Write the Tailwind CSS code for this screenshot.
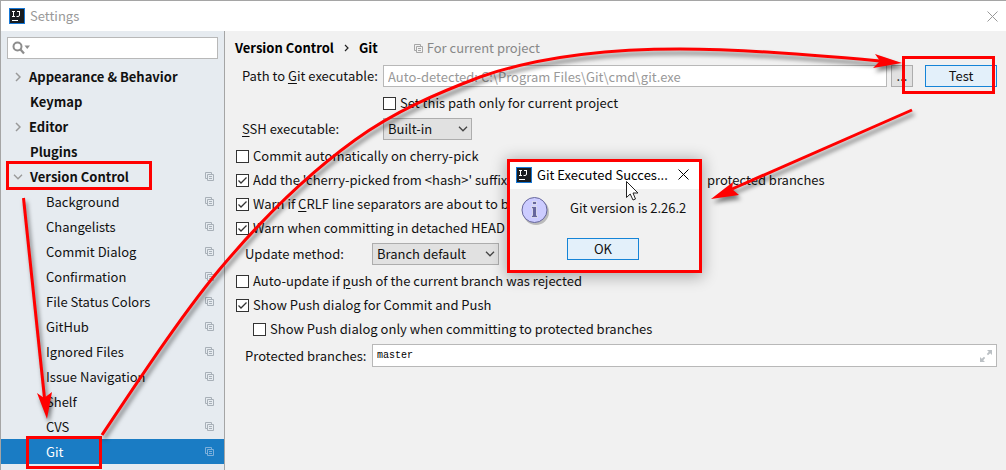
<!DOCTYPE html>
<html lang="en">
<head>
<meta charset="utf-8">
<title>Settings</title>
<script src="https://cdn.jsdelivr.net/npm/@tailwindcss/browser@4"></script>
</head>
<body class="relative flex min-h-screen flex-col overflow-hidden border-t border-l border-[#a5a5a5] bg-[#f1f1f1] font-['Noto_Sans_CJK_SC',sans-serif] text-[13px] leading-5 text-[#111]">
<svg class="hidden">
  <symbol id="copy" viewBox="0 0 9 9"><path d="M2.5 6.500H.5V.5H6.500V2.500M2.500 2.500H8.500V8.500H2.500ZM4 4.500H7M4 6.500H7" fill="none" stroke="currentColor"/></symbol>
  <symbol id="tick" viewBox="0 0 13 13"><path d="M2.500 6.500L5 9L10.500 3.500" fill="none" stroke="#333" stroke-width="1.300"/></symbol>
  <symbol id="down" viewBox="0 0 10 6"><path d="M1 .8L5 4.800L9 .8" fill="none" stroke="currentColor" stroke-width="1.300"/></symbol>
  <symbol id="idea" viewBox="0 0 16 16"><rect x=".5" y=".5" width="15" height="15" fill="#191c20" stroke="#1778d6"/><path d="M3 3.500H6M4.500 3.500V8.500M3 8.500H6M8 3.500H11M10.500 3.500V7Q10.500 8.500 9 8.500H7.500M3 12.500H9" fill="none" stroke="#fff"/></symbol>
  <symbol id="close" viewBox="0 0 11 11"><path d="M.5 .5L10.500 10.500M10.500 .5L.5 10.500" fill="none" stroke="currentColor"/></symbol>
</svg>

<header class="flex h-[30px] items-center gap-[5px] bg-white pr-2 pl-2 text-[#999]">
  <svg class="size-4"><use href="#idea"/></svg>
  <h1>Settings</h1>
  <button aria-label="Close" class="ml-auto"><svg class="size-[11px]"><use href="#close"/></svg></button>
</header>

<div class="flex flex-1">
  <nav class="flex w-56 shrink-0 flex-col border-r border-[#a5a5a5] bg-[#e6ebf0]">
    <div class="mx-1.5 mt-1.5 mb-[5px] flex h-[22px] items-center border border-[#b8b8b8] bg-white pl-1">
      <svg class="h-3.5 w-[19px] shrink-0" viewBox="0 0 19 14"><circle cx="5.500" cy="5.500" r="4" fill="none" stroke="#8d8d8d" stroke-width="2"/><path d="M8.500 8.500L12 12.500" stroke="#8d8d8d" stroke-width="2.200"/><path d="M12.500 4.500H18L15.250 8Z" fill="#8d8d8d"/></svg>
      <input type="search" aria-label="Search settings" class="min-w-0 flex-1 outline-none">
    </div>
    <a href="#" class="flex h-[25px] items-center pl-3.5 font-bold"><svg class="mr-2 h-2.5 w-1.5" viewBox="0 0 6 10"><path d="M1 1L5 5L1 9" fill="none" stroke="#999" stroke-width="1.500"/></svg>Appearance &amp; Behavior</a>
    <a href="#" class="flex h-[25px] items-center pl-[29px] font-bold">Keymap</a>
    <a href="#" class="flex h-[25px] items-center pl-3.5 font-bold"><svg class="mr-2 h-2.5 w-1.5" viewBox="0 0 6 10"><path d="M1 1L5 5L1 9" fill="none" stroke="#999" stroke-width="1.500"/></svg>Editor</a>
    <a href="#" class="flex h-[25px] items-center pl-[29px] font-bold">Plugins</a>
    <a href="#" class="flex h-[25px] items-center pr-2.5 pl-3 font-bold"><svg class="mr-[7px] h-1.5 w-2.5 text-[#999]"><use href="#down"/></svg>Version Control<svg class="ml-auto size-[9px] text-[#a8b0b8]"><use href="#copy"/></svg></a>
    <a href="#" class="flex h-[25px] items-center justify-between pr-2.5 pl-[45px]">Background<svg class="size-[9px] text-[#a8b0b8]"><use href="#copy"/></svg></a>
    <a href="#" class="flex h-[25px] items-center justify-between pr-2.5 pl-[45px]">Changelists<svg class="size-[9px] text-[#a8b0b8]"><use href="#copy"/></svg></a>
    <a href="#" class="flex h-[25px] items-center justify-between pr-2.5 pl-[45px]">Commit Dialog<svg class="size-[9px] text-[#a8b0b8]"><use href="#copy"/></svg></a>
    <a href="#" class="flex h-[25px] items-center justify-between pr-2.5 pl-[45px]">Confirmation<svg class="size-[9px] text-[#a8b0b8]"><use href="#copy"/></svg></a>
    <a href="#" class="flex h-[25px] items-center justify-between pr-2.5 pl-[45px]">File Status Colors<svg class="size-[9px] text-[#a8b0b8]"><use href="#copy"/></svg></a>
    <a href="#" class="flex h-[25px] items-center justify-between pr-2.5 pl-[45px]">GitHub<svg class="size-[9px] text-[#a8b0b8]"><use href="#copy"/></svg></a>
    <a href="#" class="flex h-[25px] items-center justify-between pr-2.5 pl-[45px]">Ignored Files<svg class="size-[9px] text-[#a8b0b8]"><use href="#copy"/></svg></a>
    <a href="#" class="flex h-[25px] items-center justify-between pr-2.5 pl-[45px]">Issue Navigation<svg class="size-[9px] text-[#a8b0b8]"><use href="#copy"/></svg></a>
    <a href="#" class="flex h-[25px] items-center justify-between pr-2.5 pl-[45px]">Shelf<svg class="size-[9px] text-[#a8b0b8]"><use href="#copy"/></svg></a>
    <a href="#" class="flex h-[25px] items-center justify-between pr-2.5 pl-[45px]">CVS<svg class="size-[9px] text-[#a8b0b8]"><use href="#copy"/></svg></a>
    <a href="#" aria-current="page" class="flex h-[25px] items-center justify-between bg-[#1a7cc4] pr-2.5 pl-[45px] text-white">Git<svg class="size-[9px] text-[#7db0db]"><use href="#copy"/></svg></a>
  </nav>

  <main class="flex min-w-0 flex-1 flex-col pt-[7px] pr-[9px] pl-2.5">
    <div class="flex h-5 items-center">
      <h2 class="flex items-center gap-2.5 font-bold text-black"><span>Version Control</span><svg class="h-2 w-[5px]" viewBox="0 0 5 8"><path d="M1 1L4 4L1 7" fill="none" stroke="#222" stroke-width="1.200"/></svg><span>Git</span></h2>
      <p class="ml-9 flex items-center gap-1 text-[#888]"><svg class="size-[9px] text-[#a5a5a5]"><use href="#copy"/></svg>For current project</p>
    </div>

    <div class="mt-[7px] flex h-[22px] items-center pl-[7px]">
      <label for="path" class="w-[141px]">Path to <u class="underline-offset-2">G</u>it executable:</label>
      <input id="path" type="text" placeholder="Auto-detected: C:\Program Files\Git\cmd\git.exe" class="h-[22px] min-w-0 flex-1 border border-[#b8b8b8] bg-white px-1 placeholder:text-[#999] placeholder:opacity-100">
      <button aria-label="Browse" class="ml-1 h-[22px] w-[22px] border border-[#adadad] bg-[#e1e1e1] leading-4">...</button>
      <button class="ml-3 h-[22px] w-[72px] border border-[#1584d7] bg-[#e3f0fa]">Test</button>
    </div>
    <label class="mt-1 ml-[148px] flex h-6 items-center gap-1"><input type="checkbox" class="size-[13px] appearance-none border border-[#333] bg-white">Set this path only for current project</label>
    <div class="mt-[3px] flex h-[22px] items-center pl-[7px]">
      <label for="ssh" class="w-[141px]"><u class="underline-offset-2">S</u>SH executable:</label>
      <div class="grid items-center">
        <select id="ssh" class="col-start-1 row-start-1 h-[22px] w-[89px] appearance-none border border-[#adadad] bg-[#e1e1e1] pl-1"><option>Built-in</option></select>
        <svg class="pointer-events-none col-start-1 row-start-1 mr-1 h-1.5 w-2.5 justify-self-end text-[#444]"><use href="#down"/></svg>
      </div>
    </div>

    <label class="mt-1 flex h-6 items-center gap-1"><input type="checkbox" class="ml-px size-[13px] appearance-none border border-[#333] bg-white">Commit automatically on cherry-pick</label>
    <label class="flex h-6 items-center gap-1"><span class="ml-px grid"><input type="checkbox" checked class="col-start-1 row-start-1 size-[13px] appearance-none border border-[#333] bg-white"><svg class="pointer-events-none col-start-1 row-start-1 size-[13px]"><use href="#tick"/></svg></span><span class="w-[450px]">Add the 'cherry-picked from &lt;hash&gt;' suffix</span><span>protected branches</span></label>
    <label class="flex h-6 items-center gap-1"><span class="ml-px grid"><input type="checkbox" checked class="col-start-1 row-start-1 size-[13px] appearance-none border border-[#333] bg-white"><svg class="pointer-events-none col-start-1 row-start-1 size-[13px]"><use href="#tick"/></svg></span><span>Warn if <u class="underline-offset-2">C</u>RLF line separators are about to b</span></label>
    <label class="flex h-6 items-center gap-1"><span class="ml-px grid"><input type="checkbox" checked class="col-start-1 row-start-1 size-[13px] appearance-none border border-[#333] bg-white"><svg class="pointer-events-none col-start-1 row-start-1 size-[13px]"><use href="#tick"/></svg></span><span>Warn when committing in detached HEAD o</span></label>

    <div class="mt-[3px] flex h-[22px] items-center pl-2.5">
      <label for="method" class="w-[127px]">Update method:</label>
      <div class="grid items-center">
        <select id="method" class="col-start-1 row-start-1 h-[22px] w-[127px] appearance-none border border-[#adadad] bg-[#e1e1e1] pl-1"><option>Branch default</option></select>
        <svg class="pointer-events-none col-start-1 row-start-1 mr-1 h-1.5 w-2.5 justify-self-end text-[#444]"><use href="#down"/></svg>
      </div>
    </div>
    <label class="mt-1 flex h-6 items-center gap-1"><input type="checkbox" class="ml-px size-[13px] appearance-none border border-[#333] bg-white"><span>Auto-update if <u class="underline-offset-2">p</u>ush of the current branch was rejected</span></label>
    <label class="flex h-6 items-center gap-1"><span class="ml-px grid"><input type="checkbox" checked class="col-start-1 row-start-1 size-[13px] appearance-none border border-[#333] bg-white"><svg class="pointer-events-none col-start-1 row-start-1 size-[13px]"><use href="#tick"/></svg></span><span>Show Push dialog for Commit and Push</span></label>
    <label class="ml-[18px] flex h-6 items-center gap-1"><input type="checkbox" class="size-[13px] appearance-none border border-[#333] bg-white">Show Push dialog only when committing to protected branches</label>
    <div class="mt-[3px] flex items-center pl-2.5">
      <label for="protected" class="w-[127px]">Protected branches:</label>
      <div class="flex h-[23px] min-w-0 flex-1 items-center border border-[#b8b8b8] bg-white pr-1 pl-1">
        <input id="protected" type="text" value="master" class="min-w-0 flex-1 font-['Liberation_Mono',monospace] text-[10px] text-black outline-none">
        <button aria-label="Expand"><svg class="block size-3 text-[#bbc0c4]" viewBox="0 0 12 12"><path d="M7 0H12V5L10.200 3.200L8 5.200L6.800 4L8.800 1.800ZM0 7V12H5L3.200 10.200L5.200 8L4 6.800L1.800 8.800Z" fill="currentColor"/></svg></button>
      </div>
    </div>
  </main>
</div>

<section role="dialog" aria-labelledby="dialog-title" class="absolute top-[158px] left-[508px] flex h-[112px] w-[191px] flex-col border border-[#1584d7] bg-[#f1f1f1] shadow-[0_3px_14px_3px_rgba(0,0,0,0.3)]">
  <div class="flex h-[29px] items-center gap-[5px] bg-white pr-2.5 pl-1.5 text-black">
    <svg class="size-4"><use href="#idea"/></svg>
    <h3 id="dialog-title">Git Executed Succes...</h3>
    <button aria-label="Close dialog" class="ml-auto"><svg class="size-[11px]"><use href="#close"/></svg></button>
  </div>
  <div class="flex items-center gap-[19px] pt-[5px] pl-[9px]">
    <svg class="size-8" viewBox="0 0 32 32"><circle cx="17" cy="18" r="13" fill="#bbb"/><circle cx="15.500" cy="16" r="12.500" fill="#ccccff" stroke="#66669c"/><path d="M13.500 7.500H17.500V10.500H13.500ZM12.500 12.500H17.500V21.500H18.500V23.500H12.500V21.500H13.500V14.500H12.500Z" fill="#66669c" stroke="#fff" stroke-width=".6"/></svg>
    <p class="pb-1">Git version is 2.26.2</p>
  </div>
  <button class="mt-3 ml-[57px] h-[22px] w-[72px] border border-[#1584d7] bg-[#e3f0fa]">OK</button>
</section>

<svg class="pointer-events-none absolute -top-px -left-px h-[470px] w-[1006px]" viewBox="0 0 1006 470" fill="none" aria-hidden="true">
  <path d="M626.500 181.500V197.500L630.200 194L633 200L635.500 199L633 193H638Z" fill="#fff" stroke="#222"/>
  <g stroke="#f00" stroke-width="3">
    <rect x="7.500" y="162.500" width="143" height="26"/>
    <rect x="27.500" y="437.500" width="73" height="30"/>
    <rect x="903.500" y="57.500" width="90" height="35"/>
    <rect x="508.500" y="160.500" width="192" height="111"/>
  </g>
  <g class="drop-shadow-[2px_4px_2px_rgba(0,0,0,0.5)]" stroke="#f00" stroke-width="3">
    <path d="M23.500 198L44.500 398"/>
    <path d="M102 435C140 378 187 307 225 263C265 216 312 171 355 140C395 111 438 93 480 77C540 56 610 49 680 49C745 49 815 55 880 61"/>
    <path d="M912 110L732 189"/>
    <g fill="#f00" stroke="none">
      <path d="M47 419L37 393L44 398L52 392Z"/>
      <path d="M902 63L875 54L880 61L873 68Z"/>
      <path d="M711 199L733 182L732 189L739 195Z"/>
    </g>
  </g>
</svg>
</body>
</html>
